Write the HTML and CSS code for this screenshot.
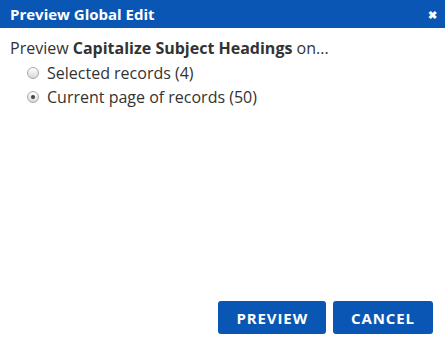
FILE: index.html
```html
<!DOCTYPE html>
<html>
  <head>
    <meta charset="utf-8">
    <title>Preview Global Edit</title>
    <link rel="stylesheet" href="styles.css">
  </head>
  <body>
    <div class="dialog">
      <div class="dialog-head">
        <span class="dialog-title">Preview Global Edit</span>
        <span class="close">&#x2716;</span>
      </div>
      <div class="dialog-body">
        <p class="lead">Preview <strong>Capitalize Subject Headings</strong> on...</p>
        <label class="choice"><input type="radio" name="scope"> Selected records (4)</label>
        <label class="choice"><input type="radio" name="scope" checked> Current page of records (50)</label>
      </div>
      <div class="dialog-foot">
        <button class="button">PREVIEW</button>
        <button class="button">CANCEL</button>
      </div>
    </div>
  </body>
</html>
```

FILE: styles.css
```css
body {
  margin: 0;
  font-family: 'Open Sans', sans-serif;
  color: #333;
}

.dialog {
  width: 445px;
  height: 341px;
  display: flex;
  flex-direction: column;
  background-color: white;
}

.dialog-head {
  background-color: #0a56b4;
  color: white;
  height: 28px;
  display: flex;
  align-items: center;
  justify-content: space-between;
  padding: 0 8px 0 10px;
}

.dialog-title {
  font-weight: bold;
  font-size: 15px;
}

.close {
  font-size: 11px;
  font-weight: bold;
}

.dialog-body {
  flex: 1;
  padding: 9px 10px 0 10px;
}

.lead {
  margin: 0 0 2px 0;
  font-size: 16px;
  line-height: 22px;
}

.choice {
  display: flex;
  align-items: center;
  font-size: 16px;
  height: 24px;
  padding-left: 17px;
}

.choice input {
  appearance: none;
  margin: 0 8px 0 0;
  width: 12px;
  height: 12px;
  border-radius: 50%;
  border: 1px solid #a8a8a8;
  background: linear-gradient(#ffffff, #d8d8d8);
  position: relative;
}

.choice input:checked::after {
  content: '';
  position: absolute;
  left: 3px;
  top: 3px;
  width: 4px;
  height: 4px;
  border-radius: 50%;
  background-color: #444;
}

.dialog-foot {
  display: flex;
  justify-content: flex-end;
  gap: 7px;
  padding: 0 12px 7px 0;
}

.button {
  background-color: #0a56b4;
  border: none;
  border-radius: 3px;
  color: white;
  font-family: 'Open Sans', sans-serif;
  font-weight: bold;
  font-size: 15px;
  letter-spacing: 0.9px;
  height: 33px;
  padding: 0 18px;
}
```
